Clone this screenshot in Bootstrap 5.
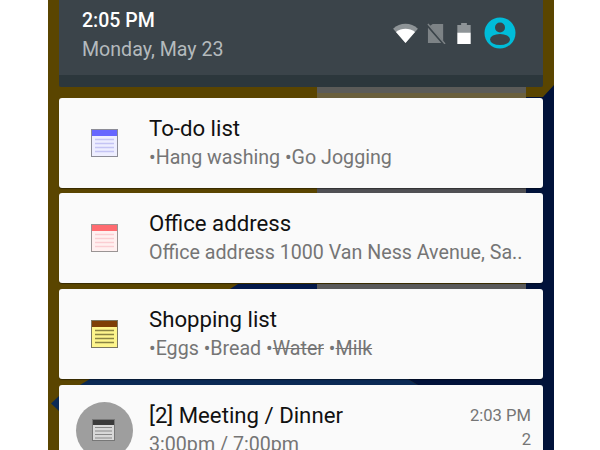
<!DOCTYPE html>
<html>
<head>
  <title>Notifications</title>
  <link rel="stylesheet" href="https://cdn.jsdelivr.net/npm/bootstrap@5.3.0/dist/css/bootstrap.min.css">
  <style>
    html, body { height: 450px; overflow: hidden; background: #fff; }
    body { font-family: Roboto, "Liberation Sans", sans-serif; }
    .phone { width: 506px; height: 450px; margin-left: 48px; padding: 0 11px; background: #5a4500; overflow: hidden; }
    .wallpaper { left: 0; top: 0; }
    .stack { z-index: 1; }
    .shade { height: 87px; background: #3b444a; border-bottom: 12px solid #2c373c; padding: 0 27px 0 23px; border-radius: 0 0 2px 2px; }
    .clock { font-size: 19.5px; font-weight: 500; line-height: 20px; color: #fff; padding-top: 11px; }
    .day { font-size: 19.6px; line-height: 24px; color: #b4babd; margin-top: 7px; }
    .status-icons { padding-top: 17px; gap: 9px; }
    .status-glyph { margin-top: 6px; }
    .battery-glyph { margin-left: 2px; }
    .note { height: 90px; background: #fafafa; border-radius: 3px; box-shadow: 0 1px 1px rgba(0,0,0,.4); }
    .note-icon { width: 90px; flex: none; }
    .sheet-glyph { margin-left: 2px; }
    .note-title { font-size: 22.2px; line-height: 26px; color: #111; margin-top: 17px; }
    .note-text { font-size: 19.65px; line-height: 24px; color: #757575; margin-top: 5px; white-space: nowrap; }
    .round-icon { width: 57px; height: 57px; border-radius: 50%; background: #9e9e9e; }
    .note-time { font-size: 16.6px; line-height: 20px; color: #757575; margin-top: 21px; }
    .note-count { font-size: 16.6px; line-height: 20px; color: #757575; margin-top: 4px; }
  </style>
</head>
<body>
  <div class="phone position-relative">
    <!-- wallpaper showing through the gaps between the notifications -->
    <svg class="wallpaper position-absolute" width="506" height="450" viewBox="0 0 506 450">
      <polygon points="506,85 495,97 478,97 478,450 506,450" fill="#01123a"/>
      <polygon points="182,289 190,284 269,284 269,289" fill="#04194a"/>
      <polygon points="32,385 42,379 360,379 370,385" fill="#0b2a55"/>
      <polygon points="360,379 478,379 478,385 370,385" fill="#01123a"/>
      <polygon points="3,403.500 11,396 11,411" fill="#0b2a55"/>
      <rect x="269" y="87" width="209" height="6" fill="#5b5b58"/>
      <rect x="269" y="93" width="209" height="5" fill="#6a5f3c"/>
      <rect x="269" y="188" width="209" height="5" fill="#505054"/>
      <rect x="269" y="284" width="209" height="5" fill="#5a5a5a"/>
    </svg>
    <div class="stack position-relative d-flex flex-column">
      <div class="shade d-flex justify-content-between">
        <div>
          <div class="clock">2:05 PM</div>
          <div class="day">Monday, May 23</div>
        </div>
        <div class="status-icons d-flex">
          <svg width="25" height="21" viewBox="0 0 26 22" class="status-glyph">
            <path d="M0 6 C7 -1 19 -1 26 6 L13 21 Z" fill="#8e9497"/>
            <path d="M3 9.500 C9 5 17 5 23 9.500 L13 21 Z" fill="#fff"/>
          </svg>
          <svg width="19" height="21" viewBox="0 0 20 22" class="status-glyph">
            <path d="M6 1 H17 V19 L3 3 Z M1 5 L15 21 H1 Z" fill="#7d8386"/>
            <path d="M1 1 L19 22" stroke="#7d8386" stroke-width="1.500"/>
          </svg>
          <svg width="14" height="21" viewBox="0 0 14 22" class="status-glyph battery-glyph">
            <path d="M4 0 H10 V2 H14 V10 H0 V2 H4 Z" fill="#8e9497"/>
            <rect y="10" width="14" height="12" fill="#fff"/>
          </svg>
          <svg width="32" height="32" viewBox="0 0 32 32" class="ms-1">
            <circle cx="16" cy="16" r="15.500" fill="#00bcd9"/>
            <circle cx="16" cy="10.500" r="5" fill="#3b444a"/>
            <ellipse cx="16" cy="22.500" rx="10" ry="5.500" fill="#3b444a"/>
          </svg>
        </div>
      </div>

      <div class="note d-flex" style="margin-top:11px">
        <div class="note-icon d-flex align-items-center justify-content-center">
          <svg width="28" height="29" viewBox="0 0 28 29" class="sheet-glyph">
            <rect x=".5" y=".5" width="26" height="27" fill="#eeeeff" stroke="#8c8c96"/>
            <rect x="1" y="1" width="25" height="6" fill="#6666ff"/>
            <path d="M4 10.500 H23 M4 14.500 H23 M4 18.500 H23 M4 22.500 H23" stroke="#c4c4f4" stroke-width="1.500"/>
          </svg>
        </div>
        <div>
          <div class="note-title">To-do list</div>
          <div class="note-text">•Hang washing •Go Jogging</div>
        </div>
      </div>

      <div class="note d-flex" style="margin-top:5px">
        <div class="note-icon d-flex align-items-center justify-content-center">
          <svg width="28" height="29" viewBox="0 0 28 29" class="sheet-glyph">
            <rect x=".5" y=".5" width="26" height="27" fill="#fff0f0" stroke="#9a9494"/>
            <rect x="1" y="1" width="25" height="6" fill="#ff6b70"/>
            <path d="M4 10.500 H23 M4 14.500 H23 M4 18.500 H23 M4 22.500 H23" stroke="#fbcdd2" stroke-width="1.500"/>
          </svg>
        </div>
        <div>
          <div class="note-title">Office address</div>
          <div class="note-text">Office address 1000 Van Ness Avenue, Sa..</div>
        </div>
      </div>

      <div class="note d-flex" style="margin-top:6px">
        <div class="note-icon d-flex align-items-center justify-content-center">
          <svg width="28" height="29" viewBox="0 0 28 29" class="sheet-glyph">
            <rect x=".5" y=".5" width="26" height="27" fill="#fdf58c" stroke="#7a7660"/>
            <rect x="1" y="1" width="25" height="6" fill="#7e3f06"/>
            <path d="M4 10.500 H23 M4 14.500 H23 M4 18.500 H23 M4 22.500 H23" stroke="#8a8443" stroke-width="1.500"/>
          </svg>
        </div>
        <div>
          <div class="note-title">Shopping list</div>
          <div class="note-text">•Eggs •Bread •<s>Water</s> •<s>Milk</s></div>
        </div>
      </div>

      <div class="note d-flex" style="margin-top:6px">
        <div class="note-icon d-flex justify-content-center" style="padding-top:17px">
          <div class="round-icon d-flex align-items-center justify-content-center">
            <svg width="24" height="23" viewBox="0 0 24 23">
              <rect x=".5" y=".5" width="22" height="21" fill="#d8d8d8" stroke="#777"/>
              <rect x="1" y="1" width="21" height="5" fill="#3a3a3a"/>
              <path d="M3 8.500 H20 M3 12 H20 M3 15.500 H20 M3 19 H20" stroke="#8a8a8a"/>
            </svg>
          </div>
        </div>
        <div class="flex-grow-1">
          <div class="note-title">[2] Meeting / Dinner</div>
          <div class="note-text">3:00pm / 7:00pm</div>
        </div>
        <div class="text-end" style="padding-right:12px">
          <div class="note-time">2:03 PM</div>
          <div class="note-count">2</div>
        </div>
      </div>
    </div>
  </div>
  <script src="https://cdn.jsdelivr.net/npm/bootstrap@5.3.0/dist/js/bootstrap.bundle.min.js"></script>
</body>
</html>
